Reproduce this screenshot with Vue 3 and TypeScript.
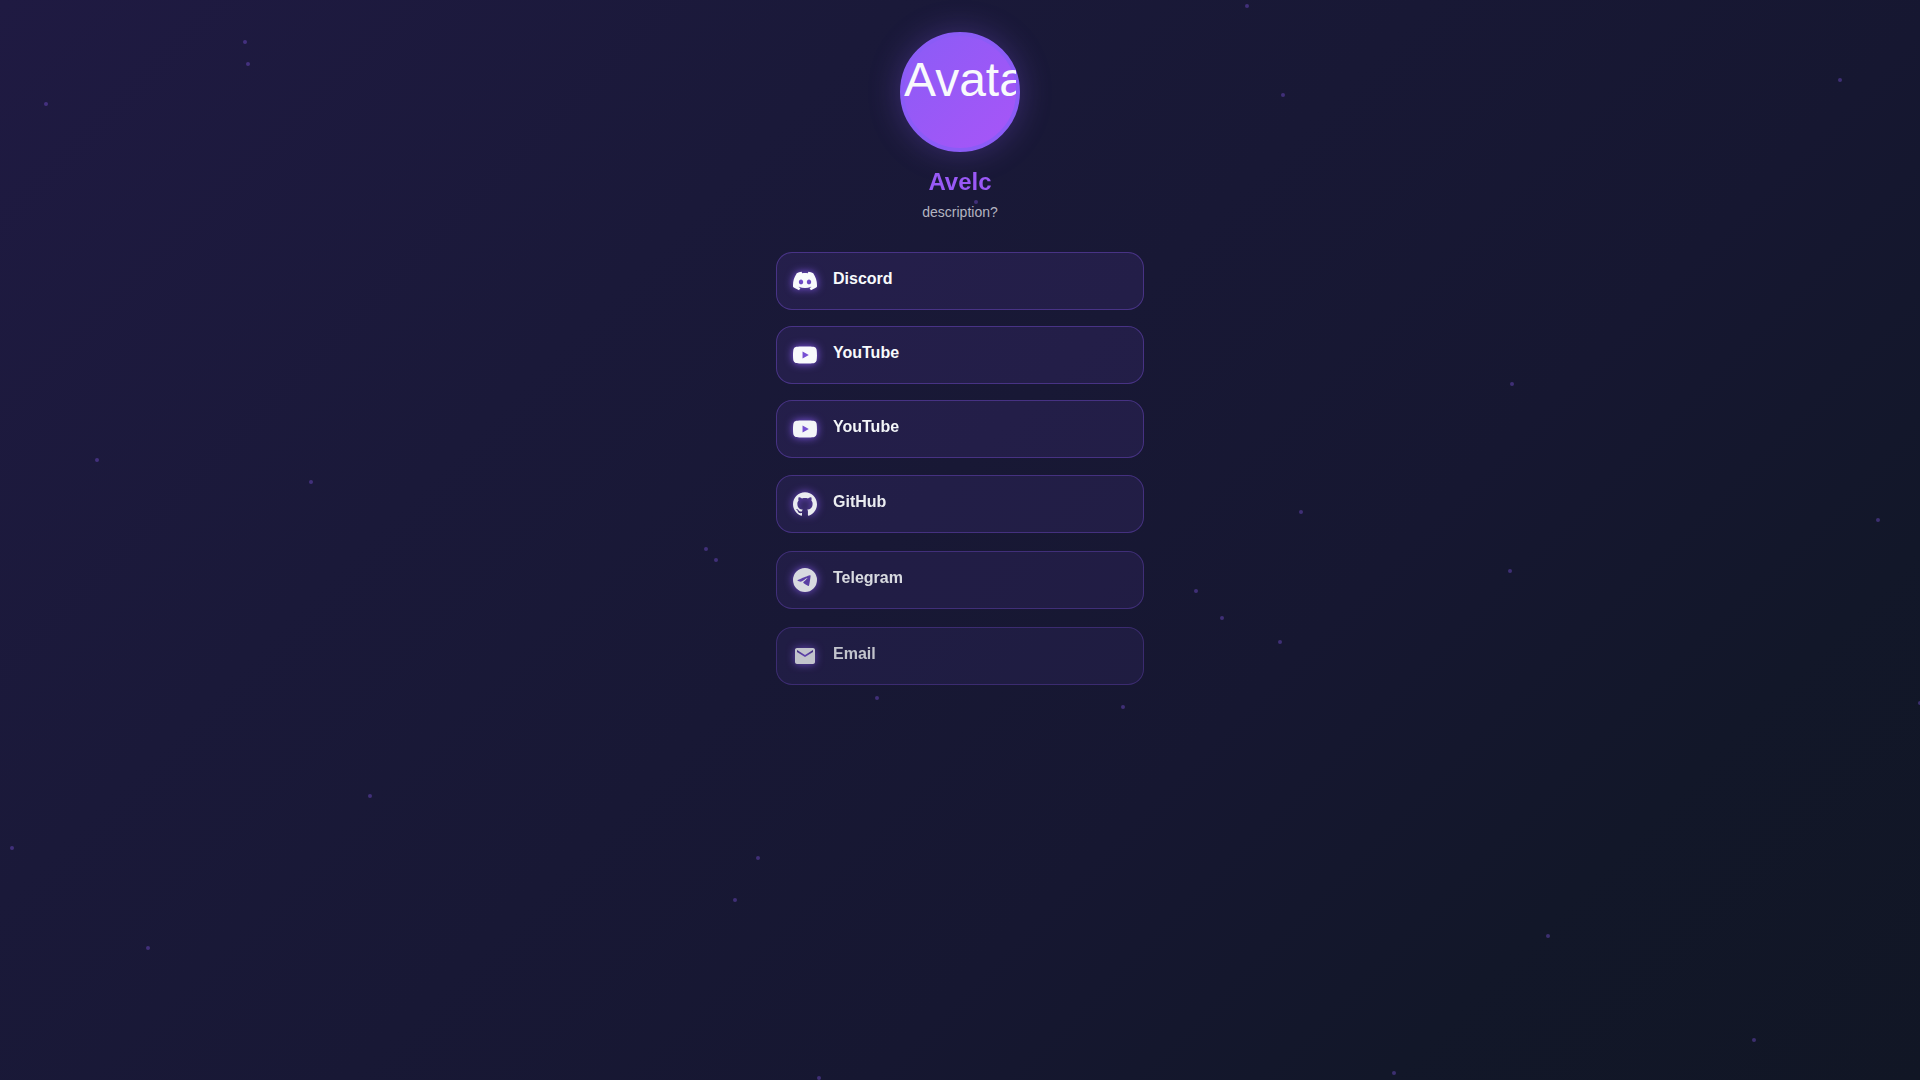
<script setup lang="ts">
interface ProfileLink {
  label: string
  href: string
  icon: string
  opacity: number
  rise: number
}

const discord =
  'M20.317 4.3698a19.7913 19.7913 0 00-4.8851-1.5152.0741.0741 0 00-.0785.0371c-.211.3753-.4447.8648-.6083 1.2495-1.8447-.2762-3.68-.2762-5.4868 0-.1636-.3933-.4058-.8742-.6177-1.2495a.077.077 0 00-.0785-.037 19.7363 19.7363 0 00-4.8852 1.515.0699.0699 0 00-.0321.0277C.5334 9.0458-.319 13.5799.0992 18.0578a.0824.0824 0 00.0312.0561c2.0528 1.5076 4.0413 2.4228 5.9929 3.0294a.0777.0777 0 00.0842-.0276c.4616-.6304.8731-1.2952 1.226-1.9942a.076.076 0 00-.0416-.1057c-.6528-.2476-1.2743-.5495-1.8722-.8923a.077.077 0 01-.0076-.1277c.1258-.0943.2517-.1923.3718-.2914a.0743.0743 0 01.0776-.0105c3.9278 1.7933 8.18 1.7933 12.0614 0a.0739.0739 0 01.0785.0095c.1202.099.246.1981.3728.2924a.077.077 0 01-.0066.1276 12.2986 12.2986 0 01-1.873.8914.0766.0766 0 00-.0407.1067c.3604.698.7719 1.3628 1.225 1.9932a.076.076 0 00.0842.0286c1.961-.6067 3.9495-1.5219 6.0023-3.0294a.077.077 0 00.0313-.0552c.5004-5.177-.8382-9.6739-3.5485-13.6604a.061.061 0 00-.0312-.0286zM8.02 15.3312c-1.1825 0-2.1569-1.0857-2.1569-2.419 0-1.3332.9555-2.4189 2.157-2.4189 1.2108 0 2.1757 1.0952 2.1568 2.419 0 1.3332-.9555 2.4189-2.1569 2.4189zm7.9748 0c-1.1825 0-2.1569-1.0857-2.1569-2.419 0-1.3332.9554-2.4189 2.1569-2.4189 1.2108 0 2.1757 1.0952 2.1568 2.419 0 1.3332-.946 2.4189-2.1568 2.4189Z'
const youtube =
  'M23.498 6.186a3.016 3.016 0 0 0-2.122-2.136C19.505 3.545 12 3.545 12 3.545s-7.505 0-9.377.505A3.017 3.017 0 0 0 .502 6.186C0 8.07 0 12 0 12s0 3.93.502 5.814a3.016 3.016 0 0 0 2.122 2.136c1.871.505 9.376.505 9.376.505s7.505 0 9.377-.505a3.015 3.015 0 0 0 2.122-2.136C24 15.93 24 12 24 12s0-3.93-.502-5.814zM9.545 15.568V8.432L15.818 12l-6.273 3.568z'
const github =
  'M12 .297c-6.63 0-12 5.373-12 12 0 5.303 3.438 9.8 8.205 11.385.6.113.82-.258.82-.577 0-.285-.01-1.04-.015-2.04-3.338.724-4.042-1.61-4.042-1.61C4.422 18.07 3.633 17.7 3.633 17.7c-1.087-.744.084-.729.084-.729 1.205.084 1.838 1.236 1.838 1.236 1.07 1.835 2.809 1.305 3.495.998.108-.776.417-1.305.76-1.605-2.665-.3-5.466-1.332-5.466-5.93 0-1.31.465-2.38 1.235-3.22-.135-.303-.54-1.523.105-3.176 0 0 1.005-.322 3.3 1.23.96-.267 1.98-.399 3-.405 1.02.006 2.04.138 3 .405 2.28-1.552 3.285-1.23 3.285-1.23.645 1.653.24 2.873.12 3.176.765.84 1.23 1.91 1.23 3.22 0 4.61-2.805 5.625-5.475 5.92.42.36.81 1.096.81 2.22 0 1.606-.015 2.896-.015 3.286 0 .315.21.69.825.57C20.565 22.092 24 17.592 24 12.297c0-6.627-5.373-12-12-12'
const telegram =
  'M11.944 0A12 12 0 0 0 0 12a12 12 0 0 0 12 12 12 12 0 0 0 12-12A12 12 0 0 0 12 0a12 12 0 0 0-.056 0zm4.962 7.224c.1-.002.321.023.465.14a.506.506 0 0 1 .171.325c.016.093.036.306.02.472-.18 1.898-.962 6.502-1.36 8.627-.168.9-.499 1.201-.82 1.23-.696.065-1.225-.46-1.9-.902-1.056-.693-1.653-1.124-2.678-1.8-1.185-.78-.417-1.21.258-1.91.177-.184 3.247-2.977 3.307-3.23.007-.032.014-.15-.056-.212s-.174-.041-.249-.024c-.106.024-1.793 1.14-5.061 3.345-.48.33-.913.49-1.302.48-.428-.008-1.252-.241-1.865-.44-.752-.245-1.349-.374-1.297-.789.027-.216.325-.437.893-.663 3.498-1.524 5.83-2.529 6.998-3.014 3.332-1.386 4.025-1.627 4.476-1.635z'
const email =
  'M20 4H4c-1.1 0-1.99.9-1.99 2L2 18c0 1.1.9 2 2 2h16c1.1 0 2-.9 2-2V6c0-1.1-.9-2-2-2zm0 4l-8 5-8-5V6l8 5 8-5v2z'

// Entrance progress of each card: later cards are fainter and sit lower.
const links: ProfileLink[] = [
  { label: 'Discord', href: '#discord', icon: discord, opacity: 1, rise: 0 },
  { label: 'YouTube', href: '#youtube', icon: youtube, opacity: 1, rise: 0 },
  { label: 'YouTube', href: '#youtube-2', icon: youtube, opacity: 0.98, rise: 0 },
  { label: 'GitHub', href: '#github', icon: github, opacity: 0.94, rise: 1 },
  { label: 'Telegram', href: '#telegram', icon: telegram, opacity: 0.86, rise: 3 },
  { label: 'Email', href: '#email', icon: email, opacity: 0.76, rise: 5 },
]

// Particle centres on a 1920 x 1080 field that stretches with the window.
const particles: [number, number][] = [
  [245, 42], [248, 64], [46, 104], [97, 460], [311, 482],
  [1247, 6], [1283, 95], [1840, 80], [1512, 384], [1301, 512],
  [1878, 520], [1510, 571], [1222, 618], [1280, 642], [1920, 703],
  [370, 796], [12, 848], [758, 858], [735, 900], [148, 948],
  [819, 1078], [706, 549], [716, 560], [1196, 591], [877, 698],
  [1123, 707], [1548, 936], [1754, 1040], [1394, 1073], [976, 202],
]
</script>

<template>
  <div class="page">
    <div class="particles" aria-hidden="true">
      <span
        v-for="([x, y], i) in particles"
        :key="i"
        class="particle"
        :style="{ left: `${(x / 1920) * 100}%`, top: `${(y / 1080) * 100}%` }"
      ></span>
    </div>
    <main class="profile">
      <header class="intro">
        <div class="avatar"><span class="avatar-text">Avatar</span></div>
        <h1 class="name">Avelc</h1>
        <p class="description">description?</p>
      </header>
      <nav class="links" aria-label="Profile links">
        <a
          v-for="link in links"
          :key="link.href"
          class="card"
          :href="link.href"
          :style="{ opacity: link.opacity, transform: `translateY(${link.rise}px)` }"
        >
          <svg class="icon" viewBox="0 0 24 24" aria-hidden="true"><path :d="link.icon" /></svg>
          <span class="label">{{ link.label }}</span>
        </a>
      </nav>
    </main>
  </div>
</template>

<style>
body {
  margin: 0;
}
</style>

<style scoped>
.page {
  position: relative;
  min-height: 100vh;
  overflow: hidden;
  background: linear-gradient(135deg, #1f1a42 0%, #1a1939 30%, #161731 65%, #121729 82%, #111625 100%);
  color: #f8fafc;
  font-family: "Liberation Sans", Arial, sans-serif;
}

.particles {
  position: absolute;
  inset: 0;
}

.particle {
  position: absolute;
  width: 4px;
  height: 4px;
  margin: -2px 0 0 -2px;
  border-radius: 50%;
  background: rgba(139, 92, 246, 0.35);
}

.profile {
  position: relative;
  box-sizing: border-box;
  width: 100%;
  max-width: 400px;
  margin: 0 auto;
  padding: 32px 16px;
}

.intro {
  display: flex;
  flex-direction: column;
  align-items: center;
  margin-bottom: 32px;
  text-align: center;
}

.avatar {
  box-sizing: border-box;
  width: 120px;
  height: 120px;
  margin-bottom: 16px;
  border: 4px solid #8b5cf6;
  border-radius: 50%;
  background: linear-gradient(135deg, #8b5cf6, #a855f7);
  box-shadow: 0 0 32px rgba(139, 92, 246, 0.3);
}

.avatar-text {
  display: block;
  overflow: hidden;
  font-size: 48px;
  line-height: 88px;
  text-align: left;
}

.name {
  width: 100%;
  margin: 0 0 8px;
  background: linear-gradient(135deg, #8b5cf6, #a855f7);
  -webkit-background-clip: text;
  background-clip: text;
  color: transparent;
  font-size: 24px;
  font-weight: 700;
  line-height: 28px;
}

.description {
  margin: 0;
  color: #b4b5c1;
  font-size: 14px;
  line-height: 16px;
}

.links {
  display: flex;
  flex-direction: column;
  gap: 16px;
}

.card {
  display: flex;
  align-items: center;
  gap: 16px;
  padding: 16px;
  border: 1px solid rgba(139, 92, 246, 0.35);
  border-radius: 16px;
  background: rgba(139, 92, 246, 0.1);
  color: #f8fafc;
  text-decoration: none;
}

.icon {
  width: 24px;
  height: 24px;
  fill: currentColor;
  filter: drop-shadow(0 0 4px #8b5cf6);
}

.label {
  align-self: flex-start;
  font-size: 16px;
  font-weight: 600;
  line-height: 20px;
}
</style>
